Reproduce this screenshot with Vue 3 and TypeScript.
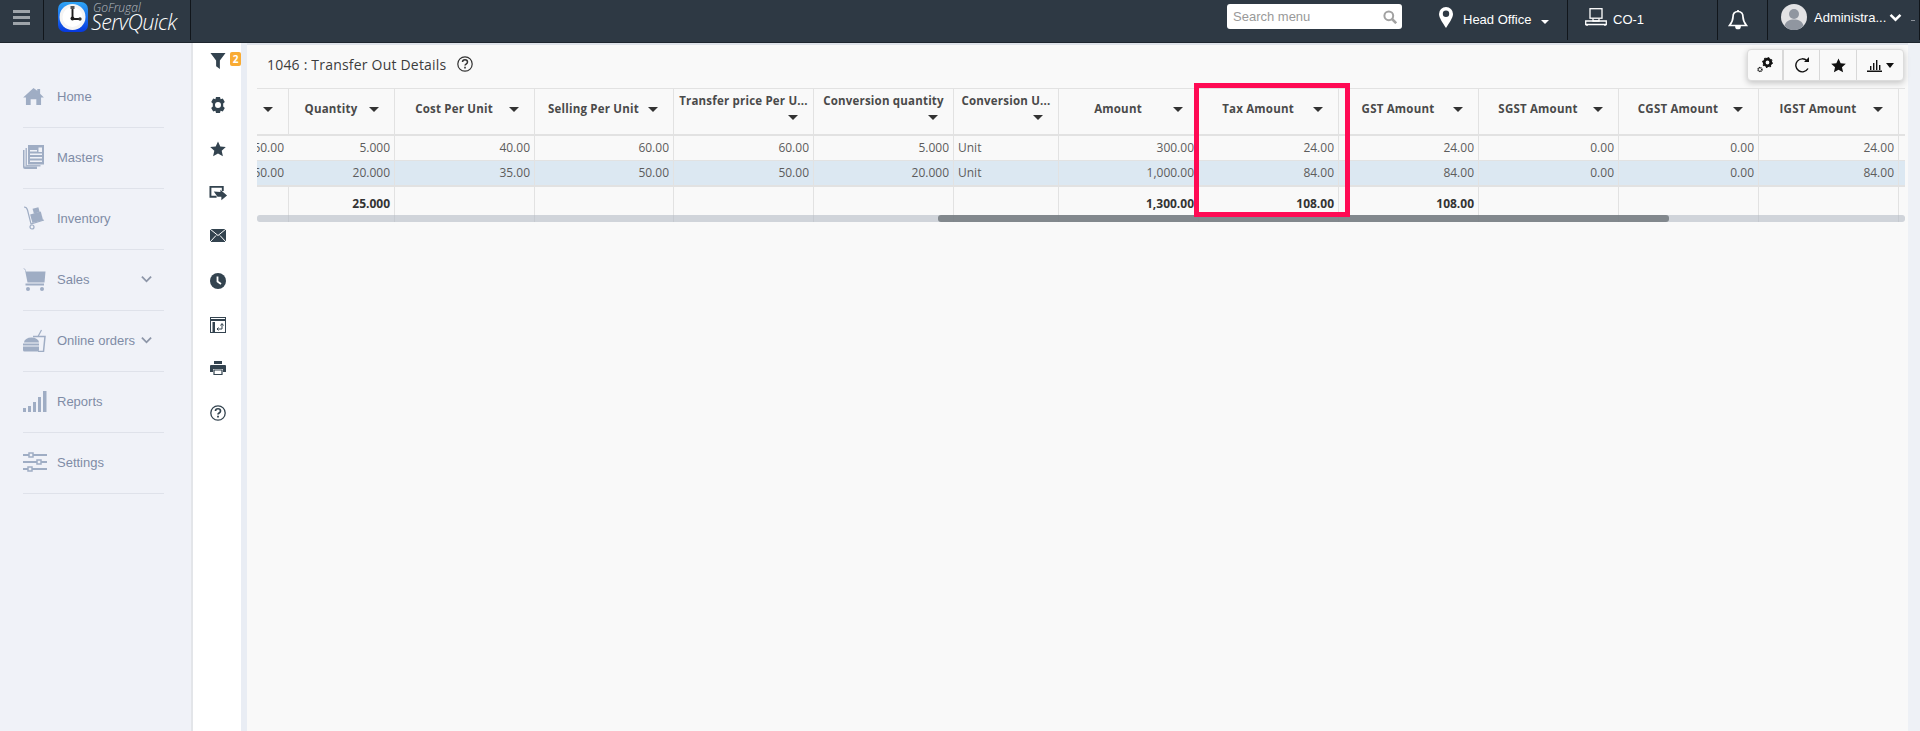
<script setup lang="ts">
interface Col { w: number; label: string; wrap?: boolean; r1: string; r2: string; f: string; left?: boolean }
const cols: Col[] = [
  { w: 32, label: '', r1: '50.00', r2: '50.00', f: '' },
  { w: 106, label: 'Quantity', r1: '5.000', r2: '20.000', f: '25.000' },
  { w: 140, label: 'Cost Per Unit', r1: '40.00', r2: '35.00', f: '' },
  { w: 139, label: 'Selling Per Unit', r1: '60.00', r2: '50.00', f: '' },
  { w: 140, label: 'Transfer price Per U...', wrap: true, r1: '60.00', r2: '50.00', f: '' },
  { w: 140, label: 'Conversion quantity', wrap: true, r1: '5.000', r2: '20.000', f: '' },
  { w: 105, label: 'Conversion U...', wrap: true, r1: 'Unit', r2: 'Unit', f: '', left: true },
  { w: 140, label: 'Amount', r1: '300.00', r2: '1,000.00', f: '1,300.00' },
  { w: 140, label: 'Tax Amount', r1: '24.00', r2: '84.00', f: '108.00' },
  { w: 140, label: 'GST Amount', r1: '24.00', r2: '84.00', f: '108.00' },
  { w: 140, label: 'SGST Amount', r1: '0.00', r2: '0.00', f: '' },
  { w: 140, label: 'CGST Amount', r1: '0.00', r2: '0.00', f: '' },
  { w: 140, label: 'IGST Amount', r1: '24.00', r2: '84.00', f: '' },
]
const nav = [
  { label: 'Home', icon: 'home', chev: false },
  { label: 'Masters', icon: 'masters', chev: false },
  { label: 'Inventory', icon: 'inventory', chev: false },
  { label: 'Sales', icon: 'sales', chev: true },
  { label: 'Online orders', icon: 'online', chev: true },
  { label: 'Reports', icon: 'reports', chev: false },
  { label: 'Settings', icon: 'settings', chev: false },
]
</script>

<template>
  <div class="page">
    <header class="top">
      <div class="burger"><i></i><i></i><i></i></div>
      <div class="brand">
        <svg class="logo" viewBox="0 0 30 30" width="30" height="30">
          <defs>
            <linearGradient id="lg" x1="0" y1="0" x2="0" y2="1">
              <stop offset="0" stop-color="#2fa6f7" />
              <stop offset="1" stop-color="#0638e0" />
            </linearGradient>
          </defs>
          <rect width="30" height="30" rx="7" fill="url(#lg)" />
          <circle cx="14.500" cy="15" r="13" fill="#f4f4f4" />
          <circle cx="14.500" cy="15" r="10" fill="#fff" />
          <path d="M14.500 5.500v11.500h8" fill="none" stroke="#1d1d1d" stroke-width="1.900" />
          <rect x="12.500" y="4" width="4" height="3" fill="#555" />
          <circle cx="14.500" cy="16.500" r="2" fill="#1d1d1d" />
          <circle cx="22" cy="17" r="1.700" fill="#333" />
        </svg>
        <div class="brandtext"><span class="gf">GoFrugal</span><span class="sq">ServQuick</span></div>
      </div>
      <div class="spacer"></div>
      <div class="search"><span>Search menu</span>
        <svg viewBox="0 0 14 14" width="14" height="14"><circle cx="5.800" cy="5.800" r="4.400" fill="none" stroke="#a2a2a2" stroke-width="2" /><path d="M9 9l4.200 4.200" stroke="#a2a2a2" stroke-width="2.600" /></svg>
      </div>
      <div class="loc">
        <svg class="up" viewBox="0 0 14 21" width="14" height="21"><path fill-rule="evenodd" d="M7 0a7 7 0 0 1 7 7c0 4-4 9-7 14C4 16 0 11 0 7a7 7 0 0 1 7-7zm0 3.500a3.200 3.200 0 1 0 0 6.400 3.200 3.200 0 0 0 0-6.400z" fill="#fff" /></svg>
        <span>Head Office</span><b class="caret-w"></b>
      </div>
      <div class="co">
        <svg class="up" viewBox="0 0 22 18" width="22" height="18" fill="none" stroke="#fff" stroke-width="1.300"><rect x="5" y=".7" width="12" height="9.500" /><path d="M8 10.500v2.500h6v-2.500" /><path d="M.7 13h20.600v3.500H.7z" /><path d="M2 17v1M20 17v1" /></svg>
        <span>CO-1</span>
      </div>
      <div class="bell">
        <svg viewBox="0 0 20 20" width="20" height="20" fill="none" stroke="#fff" stroke-width="1.700"><path d="M10 1.500c-3.500 0-5 2.500-5 5.500 0 4-1.500 6-3.500 8.500h17c-2-2.500-3.500-4.500-3.500-8.500 0-3-1.500-5.500-5-5.500z" /><path d="M10 0v2" /><path d="M8 16.500a2 2 0 0 0 4 0z" fill="#fff" /></svg>
      </div>
      <div class="user">
        <svg class="avatar" viewBox="0 0 26 26" width="26" height="26"><circle cx="13" cy="13" r="13" fill="#e2e2e4" /><circle cx="13" cy="10" r="5" fill="#9096a0" /><path d="M3.500 22c1-5 5-6.500 9.500-6.500s8.500 1.500 9.500 6.500a13 13 0 0 1-19 0z" fill="#9096a0" /></svg>
        <span>Administra...</span>
        <svg viewBox="0 0 14 10" width="13" height="9"><path d="M1.500 2L7 7.500 12.500 2" fill="none" stroke="#fff" stroke-width="2.800" /></svg>
        <i class="dash"></i>
      </div>
    </header>

    <div class="body">
      <aside class="side">
        <div v-for="n in nav" :key="n.label" class="nav">
          <span class="nicon">
            <svg v-if="n.icon === 'home'" viewBox="0 0 22 18" width="21" height="17" fill="#9fadc4"><path d="M11 0l4 3V1h3v5l4 4h-3v8h-5v-6H8v6H3v-8H0z" /></svg>
            <svg v-else-if="n.icon === 'masters'" viewBox="0 0 21 24" width="21" height="24" fill="#9fadc4"><path d="M0 5h1.500v16.500H14V24H2a2 2 0 0 1-2-2z" /><path d="M2.500 3H4v17h13.500v1.500h-15z" opacity=".85" /><path fill-rule="evenodd" d="M5 0h16v19.500H5zM7 5v1.500h7V5zm0 3.500V10h12V8.500zM7 12v1.500h12V12zm0 3.500V17h12v-1.500zM15.500 2.500v4.500H19V2.500z" /></svg>
            <svg v-else-if="n.icon === 'inventory'" viewBox="0 0 22 24" width="22" height="24" fill="none" stroke="#9fadc4" stroke-width="1.200"><path d="M1 1c2 0 3 1 3.500 3l3.500 14 13-4" /><rect x="8" y="7" width="11" height="9" fill="#9fadc4" stroke="none" transform="rotate(-15 13 11)" /><rect x="10" y="2" width="6" height="5" fill="#9fadc4" stroke="none" transform="rotate(-15 13 4)" /><circle cx="9" cy="21" r="2" /></svg>
            <svg v-else-if="n.icon === 'sales'" viewBox="0 0 23 23" width="23" height="23" fill="#9fadc4"><path d="M0 0l2.200 1L3 3.500h19.500l-1 11H4.500L2 2z" /><path d="M2.500 15.500h18.500v2H2.500z" /><circle cx="5" cy="21" r="2" /><circle cx="19" cy="21" r="2" /></svg>
            <svg v-else-if="n.icon === 'online'" viewBox="0 0 23 23" width="23" height="23"><path d="M10 7.500h12l-1.500 15H15" fill="none" stroke="#9fadc4" stroke-width="1.500" /><path d="M15 7.500L18.500 1" fill="none" stroke="#9fadc4" stroke-width="1.200" /><path d="M1 13.500a7.500 5 0 0 1 15 0zM0 14.500h16v2H0zM0 17.500h16V21a1.500 1.500 0 0 1-1.500 1.500h-13A1.500 1.500 0 0 1 0 21z" fill="#9fadc4" /></svg>
            <svg v-else-if="n.icon === 'reports'" viewBox="0 0 24 21" width="24" height="21" fill="#9fadc4"><rect x="0" y="17" width="3" height="4" /><rect x="5" y="15" width="3" height="6" /><rect x="10" y="11" width="3" height="10" /><rect x="15" y="6" width="3" height="15" /><rect x="20" y="0" width="3.500" height="21" /></svg>
            <svg v-else viewBox="0 0 24 20" width="24" height="20" fill="none" stroke="#9fadc4" stroke-width="2"><path d="M0 3h24M0 10h24M0 17h24" /><rect x="6" y="1" width="4" height="4" fill="#f0f2f8" stroke-width="1.500" /><rect x="14" y="8" width="4" height="4" fill="#f0f2f8" stroke-width="1.500" /><rect x="5" y="15" width="4" height="4" fill="#f0f2f8" stroke-width="1.500" /></svg>
          </span>
          <span class="nlabel">{{ n.label }}</span>
          <svg v-if="n.chev" class="chev" viewBox="0 0 12 8" width="11" height="8"><path d="M1 1.500l5 5 5-5" fill="none" stroke="#8d96a8" stroke-width="2" /></svg>
        </div>
      </aside>

      <nav class="rail">
        <div class="ri">
          <svg viewBox="0 0 16 17" width="16" height="16" fill="#33434f"><path d="M0 0h16L10 8v9l-4-3V8z" /></svg>
          <span class="badge">2</span>
        </div>
        <div class="ri"><svg viewBox="0 0 16 16" width="16" height="16" fill="#33434f"><path fill-rule="evenodd" d="M6 0h4l.6 2.200 2.200-.7 2 3.500L13.200 6.500v3l1.600 1.500-2 3.500-2.200-.7L10 16H6l-.6-2.200-2.200.7-2-3.500L2.800 9.500v-3L1.200 5l2-3.500 2.200.7zM8 5a3 3 0 1 0 0 6 3 3 0 0 0 0-6z" /></svg></div>
        <div class="ri"><svg viewBox="0 0 16 16" width="16" height="16" fill="#33434f"><path d="M8 .5l2.300 5 5.500.6-4.100 3.700 1.200 5.400L8 12.500l-4.900 2.700 1.200-5.400L.2 6.100l5.500-.6z" /></svg></div>
        <div class="ri"><svg viewBox="0 0 20 16" width="19" height="16" fill="none" stroke="#33434f" stroke-width="2"><path d="M8 12H1.500V1.500h13V6" /><path d="M5 6.500l7 .5V4.500l7 6-6 5v-3.500H9z" fill="#33434f" stroke="none" /></svg></div>
        <div class="ri"><svg viewBox="0 0 16 13" width="16" height="13"><rect width="16" height="13" rx="1" fill="#33434f" /><path d="M0 0l8 6.500L16 0M0 13l6-6.500M16 13l-6-6.500" fill="none" stroke="#fff" stroke-width="1" /></svg></div>
        <div class="ri"><svg viewBox="0 0 16 16" width="16" height="16"><circle cx="8" cy="8" r="8" fill="#33434f" /><path d="M7.500 3.500v5l3.500 2.500" fill="none" stroke="#fff" stroke-width="1.800" /></svg></div>
        <div class="ri"><svg viewBox="0 0 16 16" width="16" height="16" fill="none" stroke="#33434f"><rect x=".5" y=".5" width="15" height="15" /><path d="M1 3h14" stroke-width="2" /><path d="M2.500 5h2.500v10H2.500z" fill="#33434f" stroke="none" /><path d="M7 12h5V7M10.500 8.500L12 6.500l1.500 2M8.500 10.500L7 12l1.500 1.500" stroke-width="1" /></svg></div>
        <div class="ri"><svg viewBox="0 0 16 14" width="16" height="14" fill="#33434f"><path fill-rule="evenodd" d="M4 0h8v3H4zM1 4h14a1 1 0 0 1 1 1v6h-3V8H3v3H0V5a1 1 0 0 1 1-1z" /><path d="M4 9h8v4.500H4z" fill="none" stroke="#33434f" stroke-width="1.200" /></svg></div>
        <div class="ri"><svg viewBox="0 0 16 16" width="16" height="16" fill="none" stroke="#33434f" stroke-width="1.300"><circle cx="8" cy="8" r="7.200" /><path d="M5.500 6c0-3 5-3 5 0 0 2-2.500 2-2.500 3.500" stroke-width="1.700" /><path d="M8 10.700v1.800" stroke-width="1.800" /></svg></div>
      </nav>
      <div class="rail-gap"></div>

      <main class="main">
        <div class="titlebar">
          <span class="title">1046 : Transfer Out Details</span>
          <svg class="qm" viewBox="0 0 16 16" width="16" height="16" fill="none" stroke="#333" stroke-width="1.200"><circle cx="8" cy="8" r="7.200" /><path d="M5.500 6c0-3 5-3 5 0 0 2-2.500 2-2.500 3.500" stroke-width="1.500" /><path d="M8 10.700v1.800" stroke-width="1.600" /></svg>
          <div class="tools">
            <div class="tool first">
              <svg viewBox="0 0 16 16" width="16" height="16" fill="none" stroke="#111"><circle cx="10.500" cy="5.500" r="3.300" stroke-width="2.800" /><circle cx="10.500" cy="5.500" r="4.900" stroke-width="1.100" stroke-dasharray="1.500 2.300" /><circle cx="3" cy="12.500" r="1.900" stroke-width="1.500" stroke-dasharray="1 .4" /></svg>
            </div>
            <div class="tool">
              <svg viewBox="0 0 16 16" width="16" height="16" fill="none" stroke="#111" stroke-width="1.400"><path d="M13 3.800A6.500 6.500 0 1 0 14 11.500" /><path d="M10 5h5V0z" fill="#111" stroke="none" /></svg>
            </div>
            <div class="tool three">
              <svg viewBox="0 0 16 16" width="15" height="15" fill="#111"><path d="M8 .5l2.300 5 5.500.6-4.100 3.700 1.200 5.400L8 12.500l-4.900 2.700 1.200-5.400L.2 6.100l5.500-.6z" /></svg>
            </div>
            <div class="tool wide">
              <svg viewBox="0 0 15 13" width="15" height="13" fill="#111"><path d="M0 11.500h15V13H0zM3 7h1.400v4H3zM6 4h1.400v7H6zM9 1h1.400v10H9zM12 6h1.400v5H12z" /></svg>
              <b class="caret-k"></b>
            </div>
          </div>
        </div>

        <div class="grid">
          <div class="row head">
            <div v-for="(c, i) in cols" :key="i" class="cell" :class="{ wrap: c.wrap, cut: i === 0 }" :style="{ width: c.w + 'px' }">
              <span class="hl">{{ c.label }}</span>
              <b class="caret"></b>
            </div>
            <div class="cell tail"></div>
          </div>
          <div class="row r1">
            <div v-for="(c, i) in cols" :key="i" class="cell" :class="{ left: c.left, cut: i === 0 }" :style="{ width: c.w + 'px' }"><span>{{ c.r1 }}</span></div>
            <div class="cell tail"></div>
          </div>
          <div class="row r2">
            <div v-for="(c, i) in cols" :key="i" class="cell" :class="{ left: c.left, cut: i === 0 }" :style="{ width: c.w + 'px' }"><span>{{ c.r2 }}</span></div>
            <div class="cell tail"></div>
          </div>
          <div class="row foot">
            <div v-for="(c, i) in cols" :key="i" class="cell" :style="{ width: c.w + 'px' }">{{ c.f }}</div>
            <div class="cell tail"></div>
          </div>
          <div class="scroll"><div class="thumb"></div></div>
          <div class="redbox"></div>
        </div>
      </main>
      <div class="gutter"></div>
    </div>
  </div>
</template>

<style>
html, body { margin: 0; padding: 0; background: #f9f9f9; overflow: hidden; }
</style>

<style scoped>
.page { width: 1920px; height: 731px; display: flex; flex-direction: column; font-family: "Open Sans", "Liberation Sans", sans-serif; overflow: hidden; }
.top { height: 43px; flex: none; background: #2e3944; border-bottom: 1px solid #1e262e; display: flex; align-items: stretch; color: #fff; font-family: "Liberation Sans", Arial, sans-serif; font-size: 13px; box-sizing: border-box; }
.burger { width: 44px; margin-bottom: 2px; border-right: 1px solid #11161b; display: flex; flex-direction: column; align-items: center; gap: 3px; padding: 10px 0 0 0; box-sizing: border-box; }
.burger i { display: block; width: 17px; height: 3px; background: #9ea4aa; }
.brand { width: 147px; margin-bottom: 2px; border-right: 1px solid #11161b; display: flex; align-items: flex-start; padding: 2px 0 0 14px; box-sizing: border-box; }
.logo { flex: none; }
.brandtext { display: flex; flex-direction: column; margin: 0 0 0 3px; line-height: 1; font-family: "Open Sans", sans-serif; font-style: italic; font-weight: 300; }
.gf { font-size: 12px; height: 12px; margin-left: 2px; color: #b8bcc0; }
.sq { font-size: 21.500px; letter-spacing: -.6px; line-height: 18px; margin-top: -1px; color: #fff; }
.spacer { flex: 1; }
.search { width: 175px; height: 25px; margin-top: 4px; background: #fff; border-radius: 3px; color: #999; display: flex; justify-content: space-between; align-items: center; padding: 0 5px 0 6px; box-sizing: border-box; font-size: 13px; }
.up { margin-top: -4px; }
.loc { width: 166px; display: flex; align-items: center; padding: 0 0 2px 37px; margin-bottom: 2px; box-sizing: border-box; border-right: 1px solid #11161b; }
.loc span { margin-left: 10px; }
.caret-w { width: 0; height: 0; margin: 5px 0 0 10px; border-left: 4px solid transparent; border-right: 4px solid transparent; border-top: 4px solid #fff; }
.co { width: 150px; display: flex; align-items: center; padding: 0 0 2px 17px; margin-bottom: 2px; box-sizing: border-box; border-right: 1px solid #11161b; }
.co span { margin-left: 6px; }
.bell { width: 50px; display: flex; align-items: center; justify-content: center; padding: 0 10px 0 0; margin-bottom: 2px; border-right: 1px solid #11161b; box-sizing: border-box; }
.user { width: 152px; display: flex; align-items: center; padding: 0 0 6px 13px; margin-bottom: 2px; box-sizing: border-box; border-right: 1px solid #11161b; }
.user span { margin-left: 7px; white-space: nowrap; }
.user svg { flex: none; }
.user span + svg { margin-left: 3px; }
.dash { width: 4px; height: 1px; margin: 6px 0 0 9px; background: #8b929a; }
.body { flex: 1; display: flex; min-height: 0; }
.side { width: 193px; flex: none; background: #f0f2f8; border-right: 2px solid #e3e5e9; padding-top: 24px; box-sizing: border-box; }
.nav { position: relative; height: 61px; margin: 0 27px 0 23px; padding-bottom: 2px; box-sizing: border-box; border-bottom: 1px solid #dfe2ea; display: flex; align-items: center; color: #7f8ca6; font-family: "Liberation Sans", Arial, sans-serif; font-size: 13px; }
.nicon { width: 34px; flex: none; display: flex; align-items: center; }
.chev { position: absolute; left: 118px; top: 25px; }
.rail { width: 48px; flex: none; background: #fff; padding: 8px 0 0 2px; box-sizing: border-box; }
.rail-gap { width: 6px; flex: none; background: #e9edf4; }
.ri { height: 44px; display: flex; justify-content: center; align-items: flex-start; padding-top: 2px; position: relative; box-sizing: border-box; }
.badge { position: absolute; left: 35px; top: 1px; width: 11px; height: 14px; background: #f9ab33; color: #fff; border-radius: 2px; font-size: 10px; font-weight: 700; line-height: 14px; text-align: center; }
.main { flex: 1; background: #f9f9f9; min-width: 0; position: relative; border-top: 2px solid #dfe3ea; padding-left: 10px; box-sizing: border-box; }
.gutter { width: 12px; flex: none; background: #eef1f6; }
.titlebar { height: 43px; display: flex; align-items: center; padding-bottom: 5px; box-sizing: border-box; position: relative; }
.title { margin-left: 10px; font-size: 14px; letter-spacing: .2px; color: #3c3c3c; }
.qm { margin-left: 11px; }
.tools { position: absolute; right: 4px; top: 4px; display: flex; width: 157px; height: 32px; box-sizing: border-box; background: #f9f9f9; border: 1px solid #dcdcdc; border-radius: 4px; box-shadow: 0 2px 6px rgba(0,0,0,.22); }
.tool { width: 36px; flex: none; box-sizing: border-box; display: flex; align-items: center; justify-content: center; border-right: 1px solid #d8d8d8; }
.tool.first { border-right-width: 2px; }
.tool.three { width: 37px; }
.tool.wide { flex: 1; border-right: 0; gap: 4px; }
.caret-k { width: 0; height: 0; border-left: 4px solid transparent; border-right: 4px solid transparent; border-top: 5px solid #111; }
.grid { position: relative; width: 1648px; font-size: 12px; color: #5c5c5c; }
.row { display: flex; border-bottom: 1px solid #e2e2e2; box-sizing: border-box; }
.cell { flex: none; box-sizing: border-box; border-right: 1px solid #e2e2e2; text-align: right; padding: 0 4px; overflow: hidden; white-space: nowrap; }
.cell.tail { flex: 1; border-right: 0; padding: 0; }
.head { height: 48px; border-top: 1px solid #e2e2e2; border-bottom-width: 2px; }
.head .cell { display: flex; align-items: flex-start; padding: 13px 15px 0 4px; font-weight: 700; font-size: 11.500px; color: #4a4a4a; }
.head .hl { flex: 1; text-align: center; line-height: 14px; letter-spacing: .2px; }
.head .cell.tail { padding: 0; }
.caret { flex: none; width: 0; height: 0; margin-top: 5px; border-left: 5px solid transparent; border-right: 5px solid transparent; border-top: 5px solid #333; }
.head .cell.wrap { display: block; padding: 5px 0 0 0; text-align: center; }
.head .cell.wrap .hl { display: block; }
.head .cell.wrap .caret { display: block; margin: 7px 15px 0 auto; }
.r1 .cell { line-height: 23px; }
.r2 .cell { line-height: 24px; }
.r1 { height: 25px; }
.r2 { height: 26px; background: #dce8f2; border-bottom-width: 2px; }
.r1 .cell.cut, .r2 .cell.cut { display: flex; justify-content: flex-end; border-right-color: transparent; }
.cell.left { text-align: left; }
.foot { height: 35px; border-bottom: 0; margin-bottom: -7px; }
.foot .cell { font-weight: 700; padding-top: 10px; line-height: 14px; color: #333; }
.foot .cell.tail { padding: 0; }
.scroll { position: relative; width: 1648px; height: 7px; background: rgba(180,186,196,.6); border-radius: 3px; }
.thumb { position: absolute; left: 681px; width: 731px; top: 0; bottom: 0; background: rgba(110,116,121,.8); border-radius: 3px; }
.redbox { position: absolute; left: 937px; top: -5px; width: 156px; height: 134px; border: 5px solid #ff0a54; box-sizing: border-box; pointer-events: none; }
</style>
